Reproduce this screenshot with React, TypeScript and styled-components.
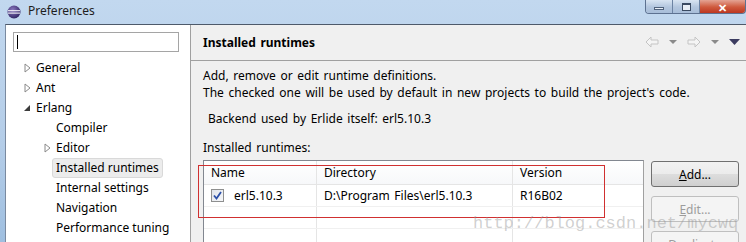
import React from "react";
import styled, { createGlobalStyle } from "styled-components";

const GlobalStyle = createGlobalStyle`
  html, body {
    margin: 0;
    padding: 0;
    background: #b9d1ea;
  }
  * {
    box-sizing: border-box;
  }
`;

const treeItems = [
  { label: "General", level: 0, arrow: "closed" },
  { label: "Ant", level: 0, arrow: "closed" },
  { label: "Erlang", level: 0, arrow: "open" },
  { label: "Compiler", level: 1, arrow: "none" },
  { label: "Editor", level: 1, arrow: "closed" },
  { label: "Installed runtimes", level: 1, arrow: "none", selected: true },
  { label: "Internal settings", level: 1, arrow: "none" },
  { label: "Navigation", level: 1, arrow: "none" },
  { label: "Performance tuning", level: 1, arrow: "none" },
];

const ClosedArrow = () => (
  <svg width="7" height="10" viewBox="0 0 7 10">
    <path d="M1 1 L6 5 L1 9 Z" fill="#fff" stroke="#8a8a8a" strokeWidth="1" />
  </svg>
);

const OpenArrow = () => (
  <svg width="7" height="10" viewBox="0 0 7 10">
    <path d="M6 2 L6 8 L0 8 Z" fill="#3c3c3c" />
  </svg>
);

const NavArrow: React.FC<{ dir: "left" | "right" }> = ({ dir }) => (
  <svg width="14" height="12" viewBox="0 0 14 12">
    <path
      d={
        dir === "left"
          ? "M1 6 L6 1 L6 4 L13 4 L13 8 L6 8 L6 11 Z"
          : "M13 6 L8 1 L8 4 L1 4 L1 8 L8 8 L8 11 Z"
      }
      fill="#f4f4f4"
      stroke="#c4c4c4"
      strokeWidth="1"
      strokeLinejoin="round"
    />
  </svg>
);

const DropTri: React.FC<{ dark?: boolean }> = ({ dark }) => (
  <svg width={dark ? 11 : 8} height="6" viewBox={dark ? "0 0 11 6" : "0 0 8 6"}>
    <path
      d={dark ? "M0 0 L11 0 L5.5 6 Z" : "M0 1 L8 1 L4 5 Z"}
      fill={dark ? "#3c3c60" : "#8a8a8a"}
    />
  </svg>
);

const EclipseLogo = () => (
  <svg width="14" height="14" viewBox="0 0 14 14">
    <defs>
      <radialGradient id="ecl" cx="40%" cy="35%" r="70%">
        <stop offset="0%" stopColor="#8c7ac0" />
        <stop offset="100%" stopColor="#2c2060" />
      </radialGradient>
    </defs>
    <circle cx="7" cy="7" r="6.5" fill="url(#ecl)" />
    <rect x="1" y="5.2" width="12" height="1" fill="#fff" />
    <rect x="1" y="7.6" width="12" height="1" fill="#fff" />
  </svg>
);

export default function App() {
  return (
    <>
      <GlobalStyle />
      <Frame>
        <TitleBar>
          <EclipseLogo />
          <TitleText>Preferences</TitleText>
          <WindowButtons>
            <WinButton>
              <MinGlyph />
            </WinButton>
            <WinButton>
              <MaxGlyph />
            </WinButton>
            <CloseButton>✕</CloseButton>
          </WindowButtons>
        </TitleBar>
        <Client>
          <Sidebar>
            <SearchBox>
              <Caret />
            </SearchBox>
            <Tree>
              {treeItems.map((item) => (
                <TreeRow key={item.label} $level={item.level}>
                  <ArrowSlot>
                    {item.arrow === "closed" && <ClosedArrow />}
                    {item.arrow === "open" && <OpenArrow />}
                  </ArrowSlot>
                  <TreeLabel $selected={item.selected}>{item.label}</TreeLabel>
                </TreeRow>
              ))}
            </Tree>
          </Sidebar>
          <Main>
            <PageHeader>
              <PageTitle>Installed runtimes</PageTitle>
              <NavTools>
                <NavArrow dir="left" />
                <DropTri />
                <NavArrow dir="right" />
                <DropTri />
                <DropTri dark />
              </NavTools>
            </PageHeader>
            <Content>
              <Description>
                Add, remove or edit runtime definitions.
                <br />
                The checked one will be used by default in new projects to build the project's code.
              </Description>
              <BackendLine>Backend used by Erlide itself: erl5.10.3</BackendLine>
              <SectionLabel>Installed runtimes:</SectionLabel>
              <TableArea>
                <Table>
                  <HeaderRow>
                    <Cell $width={113}>Name</Cell>
                    <Cell $width={196}>Directory</Cell>
                    <Cell $width={130} $last>
                      Version
                    </Cell>
                  </HeaderRow>
                  <Row>
                    <Cell $width={113}>
                      <CheckBox>
                        <svg width="9" height="9" viewBox="0 0 9 9">
                          <path d="M1 4.5 L3.5 7.5 L8 1" fill="none" stroke="#2b4fa8" strokeWidth="1.8" />
                        </svg>
                      </CheckBox>
                      erl5.10.3
                    </Cell>
                    <Cell $width={196}>D:\Program Files\erl5.10.3</Cell>
                    <Cell $width={130} $last>
                      R16B02
                    </Cell>
                  </Row>
                  <Row>
                    <Cell $width={113} />
                    <Cell $width={196} />
                    <Cell $width={130} $last />
                  </Row>
                  <Row>
                    <Cell $width={113} />
                    <Cell $width={196} />
                    <Cell $width={130} $last />
                  </Row>
                  <Highlight />
                </Table>
                <ButtonColumn>
                  <PushButton>
                    <u>A</u>dd...
                  </PushButton>
                  <PushButton disabled>
                    <u>E</u>dit...
                  </PushButton>
                  <PushButton disabled>Duplicate</PushButton>
                </ButtonColumn>
              </TableArea>
            </Content>
            <Watermark>http://blog.csdn.net/mycwq</Watermark>
          </Main>
        </Client>
      </Frame>
    </>
  );
}

const Frame = styled.div`
  position: relative;
  width: 746px;
  height: 242px;
  overflow: hidden;
  display: flex;
  flex-direction: column;
  background: linear-gradient(180deg, #c2d8ef 0%, #b4cde8 60%, #9fbfe0 100%);
  font-family: "Noto Sans", "Open Sans", sans-serif;
  font-size: 12px;
  color: #000;
`;

const TitleBar = styled.div`
  height: 24px;
  flex: none;
  display: flex;
  align-items: center;
  padding-left: 7px;
  gap: 7px;
`;

const TitleText = styled.span`
  font-size: 12px;
  color: #1e1e1e;
  margin-top: -3px;
`;

const WindowButtons = styled.div`
  position: absolute;
  top: 0;
  left: 645px;
  display: flex;
  height: 14px;
  border: 1px solid #5d7190;
  border-top: none;
  border-radius: 0 0 4px 4px;
  overflow: hidden;
`;

const WinButton = styled.div`
  width: 27px;
  height: 14px;
  display: flex;
  align-items: center;
  justify-content: center;
  background: linear-gradient(180deg, #d8e4f2 0%, #b3c6de 50%, #a6bcd8 100%);
  border-right: 1px solid #6c83a3;
`;

const MinGlyph = styled.div`
  width: 10px;
  height: 3px;
  background: #e8eef6;
  border: 1px solid #50627c;
  margin-top: 3px;
`;

const MaxGlyph = styled.div`
  width: 9px;
  height: 8px;
  border: 1px solid #3a4a62;
  border-top-width: 2px;
  background: #e8eef6;
`;

const CloseButton = styled.div`
  width: 45px;
  height: 14px;
  display: flex;
  align-items: center;
  justify-content: center;
  background: linear-gradient(180deg, #e4a494 0%, #cf5a3e 50%, #b9311c 100%);
  color: #fff;
  font-size: 11px;
  font-weight: bold;
  line-height: 1;
`;

const Client = styled.div`
  flex: 1;
  display: flex;
  margin-left: 5px;
  border-top: 1px solid #4e5a6a;
  border-left: 1px solid #7a8aa0;
  min-height: 0;
`;

const Sidebar = styled.div`
  width: 185px;
  flex: none;
  background: #fff;
  border-right: 1px solid #a0a0a0;
  padding: 7px 0 0 7px;
`;

const SearchBox = styled.div`
  width: 166px;
  height: 20px;
  border: 1px solid #a5a5a5;
  padding: 2px 3px;
`;

const Caret = styled.div`
  width: 1px;
  height: 14px;
  background: #000;
`;

const Tree = styled.div`
  margin-top: 6px;
  display: flex;
  flex-direction: column;
`;

const TreeRow = styled.div<{ $level: number }>`
  height: 20px;
  display: flex;
  align-items: center;
  padding-left: ${(p) => 11 + p.$level * 20}px;
`;

const ArrowSlot = styled.div`
  width: 8px;
  margin-right: 4px;
  display: flex;
  align-items: center;
`;

const TreeLabel = styled.span<{ $selected?: boolean }>`
  font-size: 12px;
  line-height: 18px;
  padding: 0 3px;
  margin-left: -4px;
  border: 1px solid ${(p) => (p.$selected ? "#d9d9d9" : "transparent")};
  border-radius: 3px;
  background: ${(p) => (p.$selected ? "#ececec" : "transparent")};
`;

const Main = styled.div`
  position: relative;
  flex: 1;
  background: #f0f0f0;
  display: flex;
  flex-direction: column;
  min-width: 0;
  word-spacing: 1.5px;
`;

const PageHeader = styled.div`
  height: 36px;
  flex: none;
  display: flex;
  align-items: center;
  justify-content: space-between;
  padding: 0 6px 0 12px;
  border-bottom: 1px solid #a0a0a0;
`;

const PageTitle = styled.span`
  font-weight: bold;
  font-size: 12px;
`;

const NavTools = styled.div`
  display: flex;
  align-items: center;
  gap: 10px;
  margin-top: -2px;
`;

const Content = styled.div`
  padding: 6px 0 0 12px;
  display: flex;
  flex-direction: column;
`;

const Description = styled.p`
  margin: 0;
  line-height: 17px;
`;

const BackendLine = styled.p`
  margin: 9px 0 0 5px;
  line-height: 17px;
`;

const SectionLabel = styled.p`
  margin: 12px 0 0 0;
  line-height: 17px;
`;

const TableArea = styled.div`
  display: flex;
  gap: 7px;
  margin-top: 4px;
`;

const Table = styled.div`
  position: relative;
  width: 441px;
  flex: none;
  background: #fff;
  border: 1px solid #828790;
  border-right-color: #a0a0a0;
  display: flex;
  flex-direction: column;
`;

const HeaderRow = styled.div`
  display: flex;
  height: 24px;
  background: linear-gradient(180deg, #ffffff 0%, #f7f8fa 100%);
  border-bottom: 1px solid #e5e5e5;
`;

const Row = styled.div`
  display: flex;
  height: 22px;
  border-bottom: 1px solid #f0f0f0;
`;

const Cell = styled.div<{ $width: number; $last?: boolean }>`
  width: ${(p) => p.$width}px;
  flex: ${(p) => (p.$last ? 1 : "none")};
  display: flex;
  align-items: center;
  gap: 10px;
  padding-left: 7px;
  border-right: ${(p) => (p.$last ? "none" : "1px solid #e5e5e5")};
  white-space: nowrap;
`;

const CheckBox = styled.div`
  width: 13px;
  height: 13px;
  border: 1px solid #8e8f8f;
  background: linear-gradient(135deg, #dfe3ea 0%, #f6f7f9 100%);
  display: flex;
  align-items: center;
  justify-content: center;
`;

const Highlight = styled.div`
  position: absolute;
  left: -6px;
  top: 4px;
  width: 407px;
  height: 53px;
  border: 1.5px solid #d03030;
  pointer-events: none;
`;

const ButtonColumn = styled.div`
  display: flex;
  flex-direction: column;
  gap: 9px;
  padding-top: 1px;
`;

const PushButton = styled.button`
  width: 88px;
  height: 26px;
  font-family: "Noto Sans", "Open Sans", sans-serif;
  font-size: 12px;
  color: ${(p) => (p.disabled ? "#9c9c9c" : "#000")};
  border: 1px solid ${(p) => (p.disabled ? "#bfbfbf" : "#707070")};
  border-radius: 3px;
  background: ${(p) =>
    p.disabled
      ? "#f4f4f4"
      : "linear-gradient(180deg, #f2f2f2 0%, #ebebeb 50%, #dddddd 51%, #cfcfcf 100%)"};
  padding: 0;
`;

const Watermark = styled.div`
  position: absolute;
  left: 282px;
  top: 189px;
  font-family: "Liberation Mono", "DejaVu Sans Mono", monospace;
  font-size: 17px;
  word-spacing: 0;
  color: rgba(150, 150, 150, 0.45);
  pointer-events: none;
  white-space: nowrap;
`;
